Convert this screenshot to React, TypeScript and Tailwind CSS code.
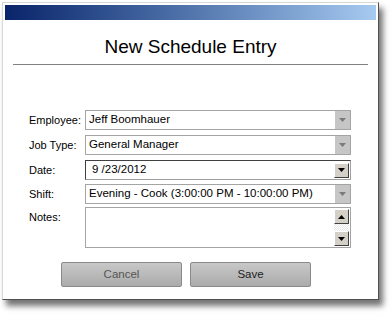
const font = { fontFamily: '"Liberation Sans", Arial, sans-serif' }

function GrayArrow() {
  return (
    <div className="w-[15px] self-stretch bg-[#c6c6c6] flex items-center justify-center">
      <svg width="7" height="4" viewBox="0 0 7 4">
        <path d="M0 0H7L3.5 4Z" fill="#7a7a7a" />
      </svg>
    </div>
  )
}

function ClassicButton({ up }: { up?: boolean }) {
  return (
    <div className="w-[15px] h-[15px] bg-[#d4d0c8] border border-t-white border-l-white border-r-[#404040] border-b-[#404040] flex items-center justify-center">
      <svg width="7" height="4" viewBox="0 0 7 4">
        <path d={up ? 'M0 4H7L3.5 0Z' : 'M0 0H7L3.5 4Z'} fill="#000" />
      </svg>
    </div>
  )
}

function Combo({ value }: { value: string }) {
  return (
    <div className="w-[266px] h-[20px] border border-[#a4a4a4] bg-white flex items-center">
      <span className="flex-1 pl-[3px] text-[11.5px] text-black truncate">{value}</span>
      <GrayArrow />
    </div>
  )
}

function Row({ label, children }: { label: string; children: React.ReactNode }) {
  return (
    <div className="flex items-start">
      <div className="w-[56px] pt-[2px] text-[11px] text-black">{label}</div>
      {children}
    </div>
  )
}

export default function App() {
  return (
    <div className="w-[392px] h-[315px] bg-white" style={font}>
      <div className="ml-[2px] mt-[2px] w-[377px] h-[298px] border border-t-[#d8d8d8] border-l-[#d8d8d8] border-r-[#505050] border-b-[#505050] shadow-[4px_6px_6px_rgba(0,0,0,0.55)] p-[2px] bg-white">
        <div className="h-[15px] bg-gradient-to-r from-[#0a246a] to-[#a6caf0]" />
        <div className="mx-[8px] mt-[16px] pb-[6px] border-b border-[#808080] text-center text-[19px] leading-[22px] text-black">
          New Schedule Entry
        </div>
        <div className="pl-[24px] mt-[45px] flex flex-col gap-[5px]">
          <Row label="Employee:">
            <Combo value="Jeff Boomhauer" />
          </Row>
          <Row label="Job Type:">
            <Combo value="General Manager" />
          </Row>
          <Row label="Date:">
            <div className="w-[266px] h-[20px] border border-t-[#404040] border-l-[#404040] border-r-[#a0a0a0] border-b-[#a0a0a0] bg-white flex items-center pr-[1px]">
              <span className="flex-1 pl-[6px] text-[11.5px] text-black">9 /23/2012</span>
              <ClassicButton />
            </div>
          </Row>
          <div className="-mt-[1px]">
            <Row label="Shift:">
              <Combo value="Evening - Cook (3:00:00 PM - 10:00:00 PM)" />
            </Row>
          </div>
          <div className="-mt-[2px]">
            <Row label="Notes:">
              <div className="w-[266px] h-[41px] border border-[#a4a4a4] bg-white flex justify-end p-[1px]">
                <div className="flex flex-col">
                  <ClassicButton up />
                  <div className="flex-1 bg-[repeating-conic-gradient(#e8e8e8_0_25%,#ffffff_0_50%)] bg-[length:2px_2px]" />
                  <ClassicButton />
                </div>
              </div>
            </Row>
          </div>
        </div>
        <div className="mt-[14px] flex gap-[8px] pl-[56px]">
          <button className="w-[121px] h-[25px] rounded-[2px] border border-[#8a8a8a] bg-gradient-to-b from-[#c8c8c8] to-[#ababab] text-[11.5px] text-[#555]">
            Cancel
          </button>
          <button className="w-[121px] h-[25px] rounded-[2px] border border-[#8a8a8a] bg-gradient-to-b from-[#c8c8c8] to-[#ababab] text-[11.5px] text-[#222]">
            Save
          </button>
        </div>
      </div>
    </div>
  )
}
